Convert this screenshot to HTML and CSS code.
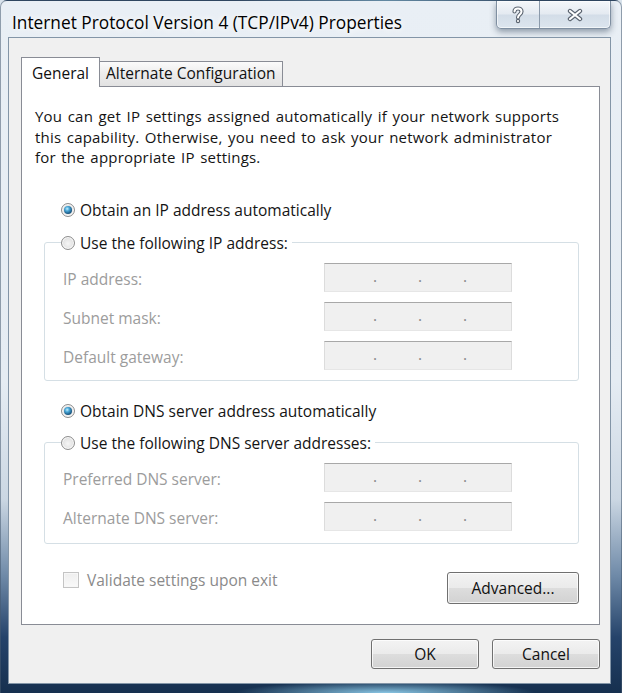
FILE: index.html
```html
<!DOCTYPE html>
<html lang="en">
<head>
<meta charset="utf-8">
<title>Internet Protocol Version 4 (TCP/IPv4) Properties</title>
<link rel="stylesheet" href="styles.css">
</head>
<body>
<div class="window">
  <div class="titlebar">
    <div class="title">Internet Protocol Version 4 (TCP/IPv4) Properties</div>
    <div class="caption">
      <div class="cbtn help">
        <svg width="14" height="18" viewBox="0 0 14 18">
          <path d="M3.5 5.5 C3.5 1.5 10.5 1.5 10.5 5.5 C10.5 8.5 7 8.5 7 11.5" fill="none" stroke="#5b6470" stroke-width="4.2" stroke-linecap="round"/>
          <circle cx="7" cy="15" r="2.2" fill="#5b6470"/>
          <path d="M3.5 5.5 C3.5 1.5 10.5 1.5 10.5 5.5 C10.5 8.5 7 8.5 7 11.5" fill="none" stroke="#fff" stroke-width="2" stroke-linecap="round"/>
          <circle cx="7" cy="15" r="1.1" fill="#fff"/>
        </svg>
      </div>
      <div class="cbtn close">
        <svg width="16" height="14" viewBox="0 0 16 14">
          <path d="M3 3 L13 11 M13 3 L3 11" fill="none" stroke="#5b6470" stroke-width="4.4" stroke-linecap="round"/>
          <path d="M3 3 L13 11 M13 3 L3 11" fill="none" stroke="#fff" stroke-width="2.2" stroke-linecap="round"/>
        </svg>
      </div>
    </div>
  </div>

  <div class="client">
    <div class="tabs">
      <div class="tab active">General</div>
      <div class="tab">Alternate Configuration</div>
    </div>
    <div class="panel">
      <p class="intro">You can get IP settings assigned automatically if your network supports<br>this capability. Otherwise, you need to ask your network administrator<br>for the appropriate IP settings.</p>

      <div class="option"><span class="radio checked"></span>Obtain an IP address automatically</div>
      <fieldset class="group">
        <legend><span class="option in-legend"><span class="radio"></span>Use the following IP address:</span></legend>
        <div class="fields">
          <span class="flabel">IP address:</span>
          <span class="ip"><i>.</i><i>.</i><i>.</i></span>
          <span class="flabel">Subnet mask:</span>
          <span class="ip"><i>.</i><i>.</i><i>.</i></span>
          <span class="flabel">Default gateway:</span>
          <span class="ip"><i>.</i><i>.</i><i>.</i></span>
        </div>
      </fieldset>

      <div class="option second"><span class="radio checked"></span>Obtain DNS server address automatically</div>
      <fieldset class="group dns">
        <legend><span class="option in-legend"><span class="radio"></span>Use the following DNS server addresses:</span></legend>
        <div class="fields">
          <span class="flabel">Preferred DNS server:</span>
          <span class="ip"><i>.</i><i>.</i><i>.</i></span>
          <span class="flabel">Alternate DNS server:</span>
          <span class="ip"><i>.</i><i>.</i><i>.</i></span>
        </div>
      </fieldset>

      <div class="footer-row">
        <div class="check"><span class="box"></span>Validate settings upon exit</div>
        <button class="btn advanced">Advanced...</button>
      </div>
    </div>
    <div class="buttons">
      <button class="btn">OK</button>
      <button class="btn">Cancel</button>
    </div>
  </div>
</div>
</body>
</html>
```
FILE: styles.css
```css
* { box-sizing: border-box; }
html, body { margin: 0; padding: 0; }
body {
  width: 622px;
  height: 693px;
  overflow: hidden;
  font-family: "Open Sans", "Noto Sans", "DejaVu Sans", sans-serif;
  font-size: 15.5px;
  color: #141414;
  background: #d9e3ec;
}

.window {
  height: 693px;
  display: flex;
  flex-direction: column;
  padding: 0 10px 10px 7px;
  border: 1px solid rgba(70, 90, 112, 0.55);
  border-bottom: 0;
  border-radius: 7px 7px 0 0;
  background:
    radial-gradient(150px 12px at 62% 100%, rgba(150, 214, 244, 0.9), rgba(150, 214, 244, 0)),
    linear-gradient(to bottom, #e9eff5 0%, #e5ecf3 55%, #cbd7e3 72%, #6f8aa8 83%, #25436a 92%, #16304f 100%);
}

/* title bar */
.titlebar {
  flex: none;
  height: 36px;
  display: flex;
}
.title {
  margin: 8px 0 0 4px;
  height: 28px;
  line-height: 28px;
  font-size: 17.3px;
  color: #000;
  text-shadow: 0 0 6px #fff, 0 0 10px #fff;
}
.caption {
  margin-left: auto;
  height: 28px;
  display: flex;
  border: 1px solid #7f8fa1;
  border-top: 0;
  border-radius: 0 0 5px 5px;
  overflow: hidden;
  background: linear-gradient(to bottom, #f4f7fa 0%, #e4eaf1 48%, #d3dde8 52%, #dce5ee 100%);
  box-shadow: 0 3px 6px rgba(30, 50, 75, 0.45), inset 0 0 0 1px rgba(255, 255, 255, 0.6);
}
.cbtn {
  display: flex;
  align-items: center;
  justify-content: center;
}
.help { width: 43px; border-right: 1px solid #8b9aab; }
.close { width: 70px; }

/* client area */
.client {
  flex: 1;
  display: flex;
  flex-direction: column;
  background: #f0f0f0;
  border: 1px solid #8395a7;
  padding: 19px 10px 14px 12px;
}

.tabs {
  flex: none;
  height: 29px;
  display: flex;
  align-items: flex-end;
}
.tab {
  height: 25px;
  line-height: 23px;
  padding: 0 6px;
  border: 1px solid #898c95;
  border-bottom: 0;
  border-left: 0;
  background: linear-gradient(to bottom, #fbfbfb 0%, #ececec 50%, #e2e2e2 100%);
  color: #111;
}
.tab.active {
  position: relative;
  z-index: 1;
  width: 79px;
  height: 30px;
  margin-bottom: -1px;
  padding: 2px 0 0;
  line-height: 26px;
  text-align: center;
  background: #fff;
  border-left: 1px solid #898c95;
}

.panel {
  flex: 1;
  display: flex;
  flex-direction: column;
  background: #fff;
  border: 1px solid #898c95;
  padding: 19px 20px 20px 13px;
}

.intro {
  margin: 0 0 32px;
  font-size: 15px;
  line-height: 20.5px;
  letter-spacing: 0.2px;
  word-spacing: 1.4px;
  white-space: nowrap;
}

.option {
  display: flex;
  align-items: center;
  gap: 5px;
  height: 20px;
  margin-left: 26px;
}
.option.second { margin-top: 20px; }
.option.in-legend { margin-left: 0; }

.radio {
  flex: none;
  width: 14px;
  height: 14px;
  border-radius: 50%;
  border: 1px solid #8e8e8e;
  background: radial-gradient(circle at 50% 55%, #f6f6f6 0%, #e4e4e4 55%, #cdcdcd 100%);
  box-shadow: inset 0 0 0 1px #fafafa;
  display: flex;
  align-items: center;
  justify-content: center;
}
.radio.checked::after {
  content: "";
  width: 8px;
  height: 8px;
  border-radius: 50%;
  background: radial-gradient(circle at 40% 35%, #c2efff 0%, #4aa8d8 30%, #1d5e8a 65%, #0f3a58 100%);
}

.group {
  margin: 13px 0 0 9px;
  padding: 10px 0 10px 18px;
  border: 1px solid #d5dfe5;
  border-radius: 3px;
  min-width: 0;
}
.group.dns { margin-top: 12px; padding-bottom: 12px; }
.group legend {
  margin-left: -2px;
  padding: 0 4px 0 0;
}

.fields {
  display: grid;
  grid-template-columns: 261px 188px;
  grid-auto-rows: 29px;
  row-gap: 10px;
  align-items: center;
}
.flabel {
  color: #9c9c9c;
  padding-top: 3px;
}
.ip {
  height: 29px;
  display: flex;
  gap: 39px;
  padding-left: 47px;
  background: #f0f0f0;
  border: 1px solid #dcdcdc;
  border-top-color: #a8a8a8;
  border-bottom-color: #e6e6e6;
}
.ip i {
  font-style: normal;
  width: 6px;
  text-align: center;
  line-height: 24px;
  color: #8a8a8a;
}

.footer-row {
  margin-top: 28px;
  display: flex;
  align-items: flex-start;
}
.check {
  display: flex;
  align-items: center;
  gap: 8px;
  height: 20px;
  margin: -2px 0 0 28px;
  color: #8a8a8a;
}
.box {
  width: 16px;
  height: 16px;
  border: 1px solid #c4c4c4;
  background: linear-gradient(to bottom, #eeeeee, #f9f9f9);
  box-shadow: inset 0 0 0 1px #f7f7f7;
}

.btn {
  font: inherit;
  color: #111;
  padding: 0;
  border: 1px solid #707070;
  border-radius: 3px;
  background: linear-gradient(to bottom, #f3f3f3 0%, #ebebeb 49%, #dddddd 51%, #d2d2d2 100%);
  box-shadow: inset 0 0 0 1px rgba(255, 255, 255, 0.75);
}
.advanced {
  margin-left: auto;
  width: 132px;
  height: 32px;
}

.buttons {
  flex: none;
  margin-top: 14px;
  display: flex;
  justify-content: flex-end;
  gap: 13px;
}
.buttons .btn {
  width: 108px;
  height: 30px;
}
```
